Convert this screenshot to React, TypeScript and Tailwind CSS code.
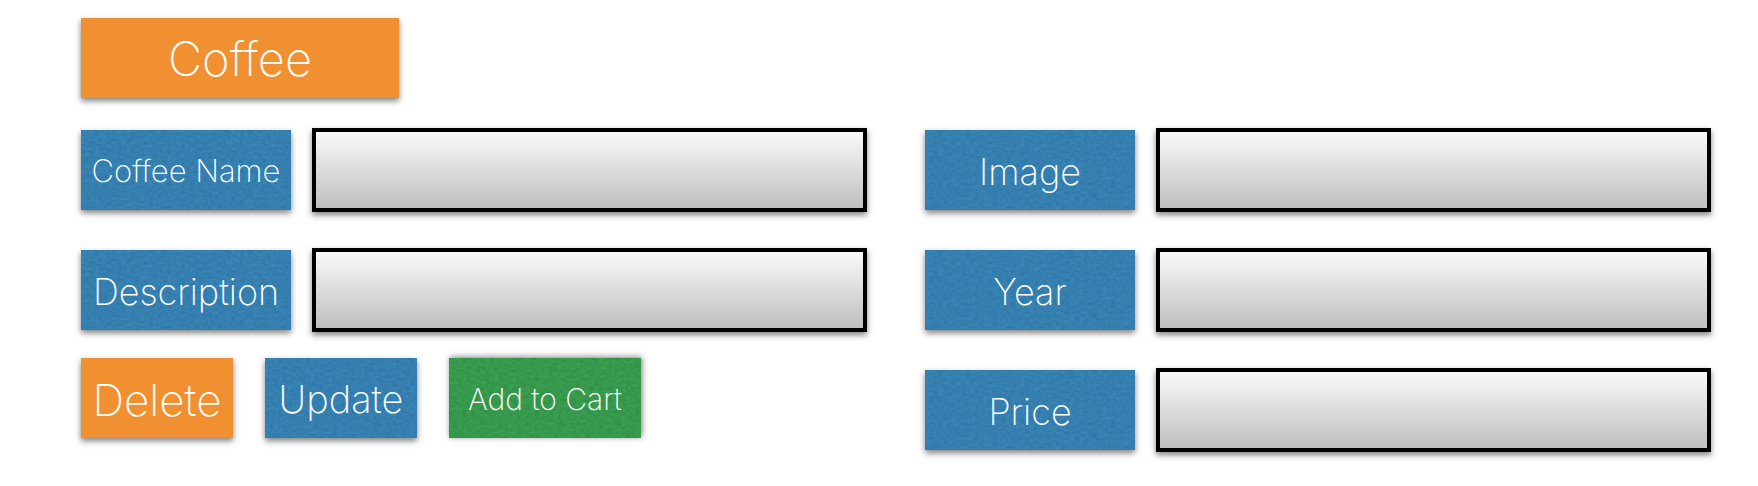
import type { ReactNode } from "react";

const shadow = "shadow-[0_3px_6px_rgba(0,0,0,0.5)]";

/* Faint paper grain laid over the coloured tiles. */
function Grain() {
  return (
    <svg aria-hidden="true" className="pointer-events-none absolute inset-0 h-full w-full">
      <rect width="100%" height="100%" filter="url(#grain)" />
    </svg>
  );
}

function GrainFilter() {
  return (
    <svg aria-hidden="true" className="absolute h-0 w-0">
      <filter id="grain" x="0" y="0" width="100%" height="100%" colorInterpolationFilters="sRGB">
        <feTurbulence type="fractalNoise" baseFrequency="0.22 0.34" numOctaves="3" seed="4" result="noise" />
        <feColorMatrix
          in="noise"
          type="matrix"
          values="0 0 0 0 0.05  0 0 0 0 0.2  0 0 0 0 0.3  0.32 0 0 0 -0.09"
        />
      </filter>
    </svg>
  );
}

type FieldProps = { id: string; label: string; size?: string };

function Field({ id, label, size = "text-4xl" }: FieldProps) {
  return (
    <div className="flex items-center gap-[21px]">
      <label
        htmlFor={id}
        className={`relative flex h-20 w-[210px] shrink-0 items-center justify-center bg-[#3885b7] pt-[3px] whitespace-nowrap ${shadow}`}
      >
        <Grain />
        <span className={`relative ${size}`}>{label}</span>
      </label>
      <input
        id={id}
        name={id}
        type="text"
        className={`h-[84px] min-w-0 flex-1 rounded-none border-4 border-black bg-linear-to-b from-[#fafafa] to-[#bfbfbf] px-4 text-2xl text-black ${shadow}`}
      />
    </div>
  );
}

type ActionProps = { children: ReactNode; className: string; grain?: boolean };

function Action({ children, className, grain = false }: ActionProps) {
  return (
    <button
      type="button"
      className={`relative flex h-20 cursor-pointer items-center justify-center pt-[3px] whitespace-nowrap ${className}`}
    >
      {grain && <Grain />}
      <span className="relative">{children}</span>
    </button>
  );
}

export default function App() {
  return (
    <main className="bg-white pt-[18px] pr-[47px] pb-[34px] pl-[81px] font-['Inter','Liberation_Sans',sans-serif] font-extralight text-white">
      <GrainFilter />
      <h1 className={`flex h-20 w-[318px] items-center justify-center bg-[#f19030] pt-[3px] text-[47px] ${shadow}`}>
        Coffee
      </h1>
      <form className="mt-[30px] grid grid-cols-2 items-start gap-[58px]">
        <div className="flex flex-col gap-9">
          <Field id="coffee-name" label="Coffee Name" size="text-[31px]" />
          <Field id="description" label="Description" />
          <div className="-mt-[10px] flex gap-8">
            <Action className={`w-[152px] bg-[#f19030] text-[44px] ${shadow}`}>Delete</Action>
            <Action grain className={`w-[152px] bg-[#3885b7] text-[38px] ${shadow}`}>
              Update
            </Action>
            <Action grain className="w-48 bg-[#39a04c] text-[30px] shadow-[1px_-1px_6px_rgba(0,0,0,0.5)]">
              Add to Cart
            </Action>
          </div>
        </div>
        <div className="flex flex-col gap-9">
          <Field id="image" label="Image" />
          <Field id="year" label="Year" />
          <Field id="price" label="Price" />
        </div>
      </form>
    </main>
  );
}
